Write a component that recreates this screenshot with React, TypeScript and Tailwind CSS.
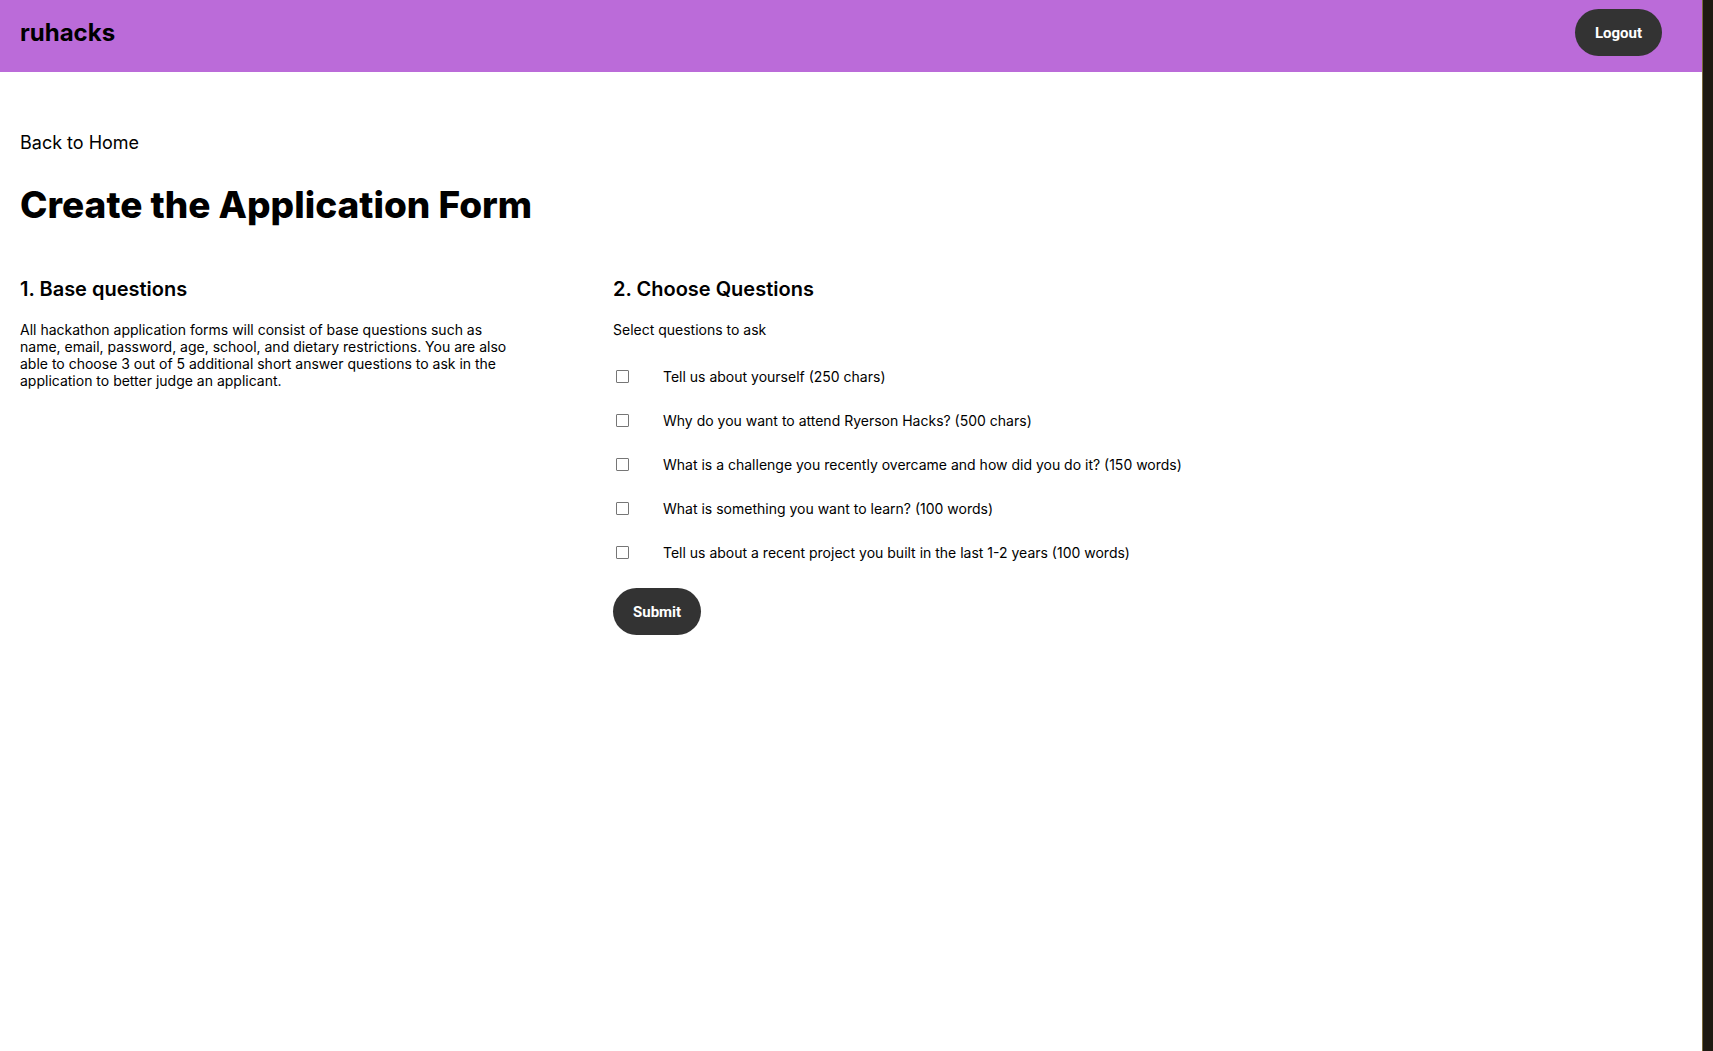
const questions = [
  "Tell us about yourself (250 chars)",
  "Why do you want to attend Ryerson Hacks? (500 chars)",
  "What is a challenge you recently overcame and how did you do it? (150 words)",
  "What is something you want to learn? (100 words)",
  "Tell us about a recent project you built in the last 1-2 years (100 words)",
];

const App = () => {
  return (
    <div className="flex min-h-[1051px] w-full bg-[#1e1a12] font-['Inter',sans-serif] text-black">
      <div className="flex-1 bg-white">
        <header className="flex h-[72px] items-center justify-between bg-[#bb6bd9] pb-[16px] pl-5 pr-[40px] pt-[9px]">
          <span className="text-[24px] font-bold">ruhacks</span>
          <button className="h-[47px] rounded-full bg-[#333333] px-5 pt-[2px] font-['Roboto',sans-serif] text-[15px] font-bold text-white">
            Logout
          </button>
        </header>

        <main className="px-5 pt-[57px]">
          <a className="block text-[18px] leading-[28px]">Back to Home</a>
          <h1 className="mt-[28px] text-[37px] font-extrabold leading-[40px]">
            Create the Application Form
          </h1>

          <div className="mt-[50px] flex">
            <section className="w-[593px] shrink-0">
              <h2 className="text-[20px] font-semibold leading-[28px]">1. Base questions</h2>
              <p className="mt-[18px] w-[500px] text-[14px] leading-[17px]">
                All hackathon application forms will consist of base questions such as name, email,
                password, age, school, and dietary restrictions. You are also able to choose 3 out of 5
                additional short answer questions to ask in the application to better judge an
                applicant.
              </p>
            </section>

            <section>
              <h2 className="text-[20px] font-semibold leading-[28px]">2. Choose Questions</h2>
              <p className="mt-[17px] text-[14px] leading-[20px]">Select questions to ask</p>
              <div className="mt-[14px] flex flex-col">
                {questions.map((q) => (
                  <label key={q} className="flex h-[44px] items-center">
                    <span className="ml-[3px] mt-px h-[13px] w-[13px] shrink-0 rounded-[1px] border border-[#767676] bg-white" />
                    <span className="ml-[34px] text-[14px]">{q}</span>
                  </label>
                ))}
              </div>
              <button className="mt-[14px] h-[47px] rounded-full bg-[#333333] px-5 pt-[2px] font-['Roboto',sans-serif] text-[15px] font-bold text-white">
                Submit
              </button>
            </section>
          </div>
        </main>
      </div>
      <div className="w-[11px] shrink-0 border-l border-[#7a6a3a] bg-[#1e1a12]" />
    </div>
  );
};

export default App;
